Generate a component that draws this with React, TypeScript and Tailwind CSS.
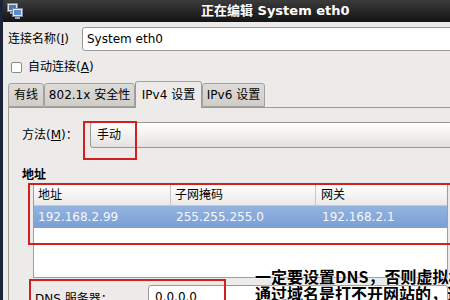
import React from "react";

const font = "font-['DejaVu_Sans','Noto_Sans_CJK_SC',sans-serif]";

const NetIcon = () => (
  <svg width="16" height="16" viewBox="0 0 16 16">
    <rect x="0.5" y="0.5" width="10" height="8" fill="#d9e0e8" stroke="#7d8a99" />
    <rect x="2" y="2" width="7" height="5" fill="#4a78b8" />
    <rect x="3" y="9" width="5" height="2" fill="#9aa5b1" />
    <rect x="5.5" y="5.5" width="10" height="8" fill="#e6ebf0" stroke="#7d8a99" />
    <rect x="7" y="7" width="7" height="5" fill="#5b8ccc" />
    <rect x="8" y="14" width="5" height="2" fill="#9aa5b1" />
  </svg>
);

const Tab = ({ label, w, active }: { label: string; w: string; active?: boolean }) => (
  <div
    className={
      active
        ? `${w} shrink-0 h-[27px] -mb-[1px] flex items-center justify-center border border-b-0 border-[#9c9a96] border-t-[#8ea6c4] rounded-t-[3px] bg-[#edebe9] z-10`
        : `${w} shrink-0 h-[24px] flex items-center justify-center border border-[#a5a29e] rounded-t-[3px] bg-gradient-to-b from-[#dedcd9] to-[#cfcdc9]`
    }
  >
    {label}
  </div>
);

export default function App() {
  return (
    <div className={`w-[450px] h-[300px] overflow-hidden relative flex bg-[#1a2338] text-[12px] text-black ${font}`}>
      <div className="w-[3px] shrink-0" />
      <div className="flex-1 flex flex-col bg-[#edebe9] min-w-0">
        {/* title bar */}
        <div className="h-[22px] shrink-0 flex items-center bg-gradient-to-b from-[#3c3c3c] to-[#141414]">
          <div className="ml-[4px] shrink-0">
            <NetIcon />
          </div>
          <span className="ml-[178px] whitespace-nowrap text-white font-bold text-[13px]">正在编辑 System eth0</span>
        </div>
        <div className="h-[2px] bg-[#dcdcdc]" />

        {/* name */}
        <div className="mt-[5px] h-[24px] flex items-center pl-[5px]">
          <span className="w-[74px] shrink-0 whitespace-nowrap">
            连接名称(<span className="underline">I</span>)
          </span>
          <div className="h-[24px] w-[400px] shrink-0 flex items-center pl-[4px] bg-white border border-[#9a9894] rounded-[3px]">
            System eth0
          </div>
        </div>

        {/* auto connect */}
        <div className="mt-[7px] h-[20px] flex items-center pl-[8px]">
          <div className="w-[11px] h-[11px] shrink-0 bg-white border border-[#8d8b88] rounded-[2px]" />
          <span className="ml-[6px] whitespace-nowrap">
            自动连接(<span className="underline">A</span>)
          </span>
        </div>

        {/* tabs */}
        <div className="mt-[5px] h-[27px] flex items-end pl-[5px] whitespace-nowrap">
          <Tab label="有线" w="w-[36px]" />
          <Tab label="802.1x 安全性" w="w-[91px]" />
          <Tab label="IPv4 设置" w="w-[67px]" active />
          <Tab label="IPv6 设置" w="w-[63px]" />
        </div>

        {/* panel */}
        <div className="ml-[5px] flex-1 border-l border-t border-[#9c9a96] pl-[13px] flex flex-col">
          <div className="mt-[14px] h-[26px] flex items-center">
            <span className="w-[68px] shrink-0 whitespace-nowrap">
              方法(<span className="underline">M</span>)：
            </span>
            <div className="h-[26px] w-[400px] shrink-0 flex items-center pl-[6px] border border-[#9a9894] rounded-[3px] bg-gradient-to-b from-white to-[#e4e2df]">
              手动
            </div>
          </div>

          <div className="mt-[19px] h-[16px] leading-[16px] font-bold">地址</div>

          {/* table */}
          <div className="mt-[1px] ml-[11px] w-[415px] h-[94px] shrink-0 bg-white border border-[#a09e9a] flex flex-col">
            <div className="h-[21px] flex items-center bg-gradient-to-b from-white to-[#ebe9e6] border-b border-[#c9c7c3]">
              <div className="w-[137px] pl-[4px] border-r border-[#c9c7c3] h-full flex items-center">地址</div>
              <div className="w-[145px] pl-[4px] border-r border-[#c9c7c3] h-full flex items-center">子网掩码</div>
              <div className="flex-1 pl-[5px]">网关</div>
            </div>
            <div className="h-[22px] flex items-center bg-gradient-to-b from-[#93b4e0] to-[#7a9fd4] text-[#f6f8fb]">
              <div className="w-[137px] pl-[4px]">192.168.2.99</div>
              <div className="w-[145px] pl-[5px]">255.255.255.0</div>
              <div className="flex-1 pl-[6px]">192.168.2.1</div>
            </div>
          </div>

          {/* dns */}
          <div className="mt-[7px] ml-[13px] flex items-start">
            <span className="w-[113px] shrink-0 pt-[5px] whitespace-nowrap">DNS 服务器：</span>
            <div className="h-[24px] w-[300px] shrink-0 flex items-center pl-[6px] bg-white border border-[#9a9894] rounded-[3px]">
              0.0.0.0
            </div>
          </div>
        </div>
      </div>

      {/* annotations */}
      <div className="absolute left-[83px] top-[121px] w-[54px] h-[39px] border-2 border-[#d21f1f]" />
      <div className="absolute left-[28px] top-[183px] w-[430px] h-[62px] border-2 border-[#d21f1f]" />
      <div className="absolute left-[29px] top-[279px] w-[197px] h-[30px] border-2 border-[#d21f1f]" />
      <div className="absolute left-[255px] top-[268px] whitespace-nowrap font-bold text-[16px] leading-[17px] font-['Noto_Sans_CJK_SC',sans-serif] [text-shadow:0_0_2px_#fff,0_0_2px_#fff]">
        <div>一定要设置DNS，否则虚拟机</div>
        <div>通过域名是打不开网站的，这</div>
      </div>
    </div>
  );
}
